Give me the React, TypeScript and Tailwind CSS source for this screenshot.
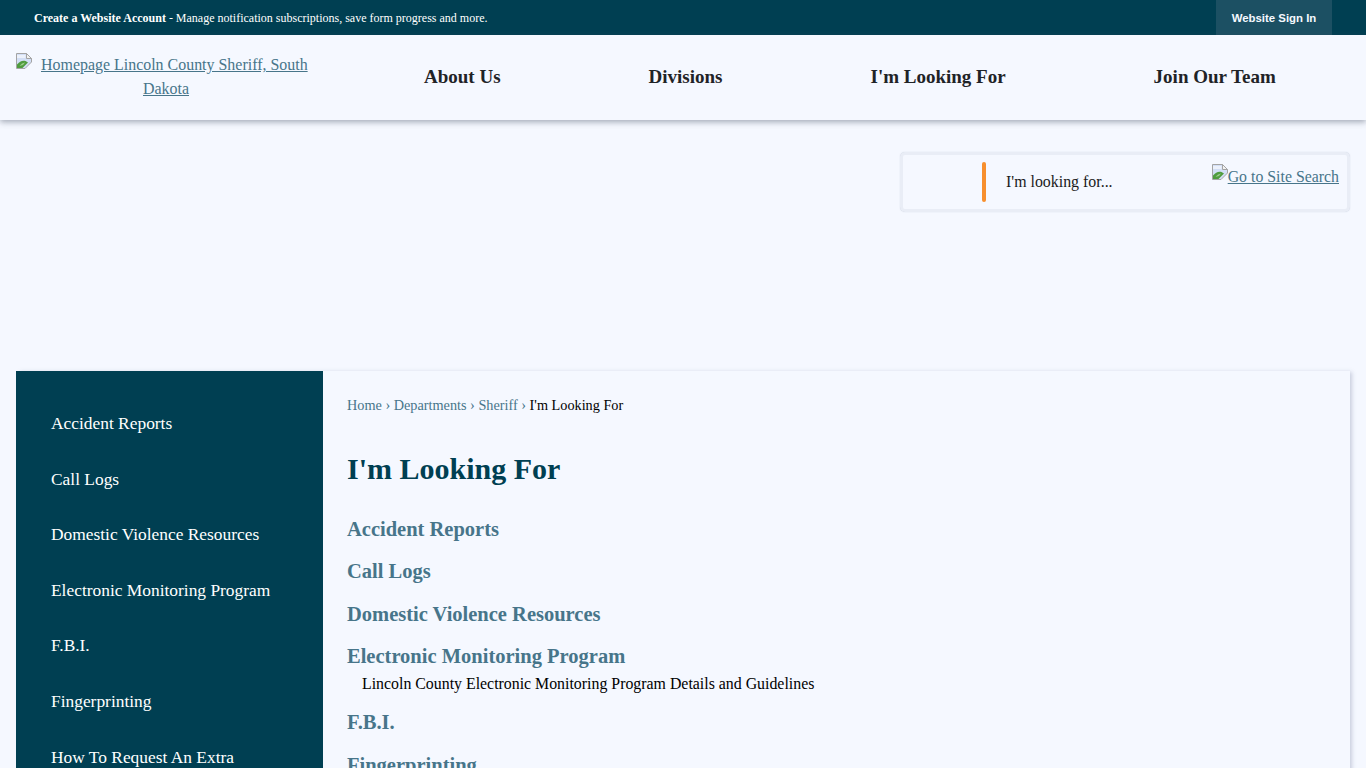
import React from 'react';

const serif = "font-['Liberation_Serif','Times_New_Roman',serif]";

const navItems = ['About Us', 'Divisions', "I'm Looking For", 'Join Our Team'];

const sideItems = [
  'Accident Reports',
  'Call Logs',
  'Domestic Violence Resources',
  'Electronic Monitoring Program',
  'F.B.I.',
  'Fingerprinting',
  'How To Request An Extra Patrol',
];

// chrome's broken image placeholder
function BrokenImage({ className = '' }: { className?: string }) {
  return (
    <svg width="16" height="16" viewBox="0 0 16 16" className={`inline-block shrink-0 ${className}`}>
      <path d="M0.5 0.5H10.5L15.5 5.5V9L9 15.5H0.5Z" fill="#d3dff6" stroke="#a4a4a4" />
      <path d="M10.5 0.5V5.5H15.5Z" fill="#f2f2f2" stroke="#a4a4a4" />
      <path d="M1 2H9.5V5H1Z" fill="#ecf1fb" />
      <path d="M1 15V11.5C3.5 8.5 6.5 7 9.5 8L12 9.5L6.5 15Z" fill="#4f9c3e" />
      <path d="M9 9.5C7 9.8 5 11 3.5 13L7 12Z" fill="#9ccd8c" />
    </svg>
  );
}

function TopBar() {
  return (
    <div className="flex h-[35px] items-center justify-between bg-[#003f52] pl-[34px] pr-[34px] text-white">
      <p className="text-[12px]">
        <strong>Create a Website Account</strong> - Manage notification subscriptions, save form progress and more.
      </p>
      <a className="flex h-full w-[116px] items-center justify-center bg-[#1c5063] pt-[2px] font-['Liberation_Sans',Arial,sans-serif] text-[11.4px] font-bold text-[#f5f9ff]">
        Website Sign In
      </a>
    </div>
  );
}

function Header() {
  return (
    <header className="relative z-10 flex h-[85px] bg-[#f5f8ff] pl-4 shadow-[0_2px_6px_rgba(60,70,90,0.45)]">
      <a className="block w-[300px] pt-[18px] text-center text-[15.95px] leading-[24px] text-[#47758a] underline">
        <span className="flex h-6 items-start whitespace-nowrap">
          <BrokenImage />
          <span className="ml-[9px]">Homepage Lincoln County Sheriff, South</span>
        </span>
        <span className="block">Dakota</span>
      </a>
      <nav className="ml-[34px] flex pt-[29px]">
        {navItems.map((item) => (
          <a key={item} className="px-[74px] text-[19px] font-bold leading-[26px] whitespace-nowrap text-[#1f2327]">
            {item}
          </a>
        ))}
      </nav>
    </header>
  );
}

function SearchBox() {
  return (
    <div className="flex justify-end pr-4 pt-[32px]">
      <div className="flex h-[60px] w-[450px] rounded-[5px] border-[3px] border-[#e9edf6] bg-[#f5f8ff] shadow-[0_0_1px_rgba(150,160,185,0.5)]">
        <div className="ml-[79px] mt-[7px] h-10 w-1 rounded-sm bg-[#f78f2e]" />
        <span className="ml-5 mt-[17px] text-[15.9px] leading-[20px] text-[#1a1a1a]">I'm looking for...</span>
        <a className="ml-auto mr-2 mt-[10px] flex text-[15.85px] leading-[24px] text-[#47758a] underline">
          <BrokenImage className="-mt-px" />
          Go to Site Search
        </a>
      </div>
    </div>
  );
}

function Sidebar() {
  return (
    <aside className="w-[307px] shrink-0 bg-[#003f52] pl-[35px] pr-[45px] pt-[38px]">
      {sideItems.map((item) => (
        <a key={item} className="mb-[27.6px] block text-[17.4px] leading-[28px] text-white">
          {item}
        </a>
      ))}
    </aside>
  );
}

function Content() {
  return (
    <main className="flex-1 pl-6 pt-[24px]">
      <div className="text-[14.25px] leading-[20px]">
        <a className="text-[#47758a]">Home</a>
        <span className="text-[#47758a]"> › </span>
        <a className="text-[#47758a]">Departments</a>
        <span className="text-[#47758a]"> › </span>
        <a className="text-[#47758a]">Sheriff</a>
        <span className="text-[#47758a]"> › </span>
        <span className="text-black">I'm Looking For</span>
      </div>
      <h1 className="mt-[34px] text-[30px] font-bold leading-[40px] text-[#003f52]">I'm Looking For</h1>
      <h2 className="mt-[25px] text-[20.5px] font-bold leading-[30px] text-[#47758a]">Accident Reports</h2>
      <h2 className="mt-[12px] text-[20.5px] font-bold leading-[30px] text-[#47758a]">Call Logs</h2>
      <h2 className="mt-[12.5px] text-[20.5px] font-bold leading-[30px] text-[#47758a]">Domestic Violence Resources</h2>
      <h2 className="mt-[12.5px] text-[20.5px] font-bold leading-[30px] text-[#47758a]">Electronic Monitoring Program</h2>
      <p className="pl-[15px] text-[15.86px] leading-[26px] text-black">
        Lincoln County Electronic Monitoring Program Details and Guidelines
      </p>
      <h2 className="mt-[10px] text-[20.5px] font-bold leading-[30px] text-[#47758a]">F.B.I.</h2>
      <h2 className="mt-[12.5px] text-[20.5px] font-bold leading-[30px] text-[#47758a]">Fingerprinting</h2>
    </main>
  );
}

export default function App() {
  return (
    <div className={`h-screen overflow-hidden bg-[#f5f8ff] ${serif}`}>
      <TopBar />
      <Header />
      <SearchBox />
      <div className="mx-4 mt-[159px] flex min-h-[500px] shadow-[3px_0_4px_-1px_rgba(120,130,160,0.35)]">
        <Sidebar />
        <Content />
      </div>
    </div>
  );
}
